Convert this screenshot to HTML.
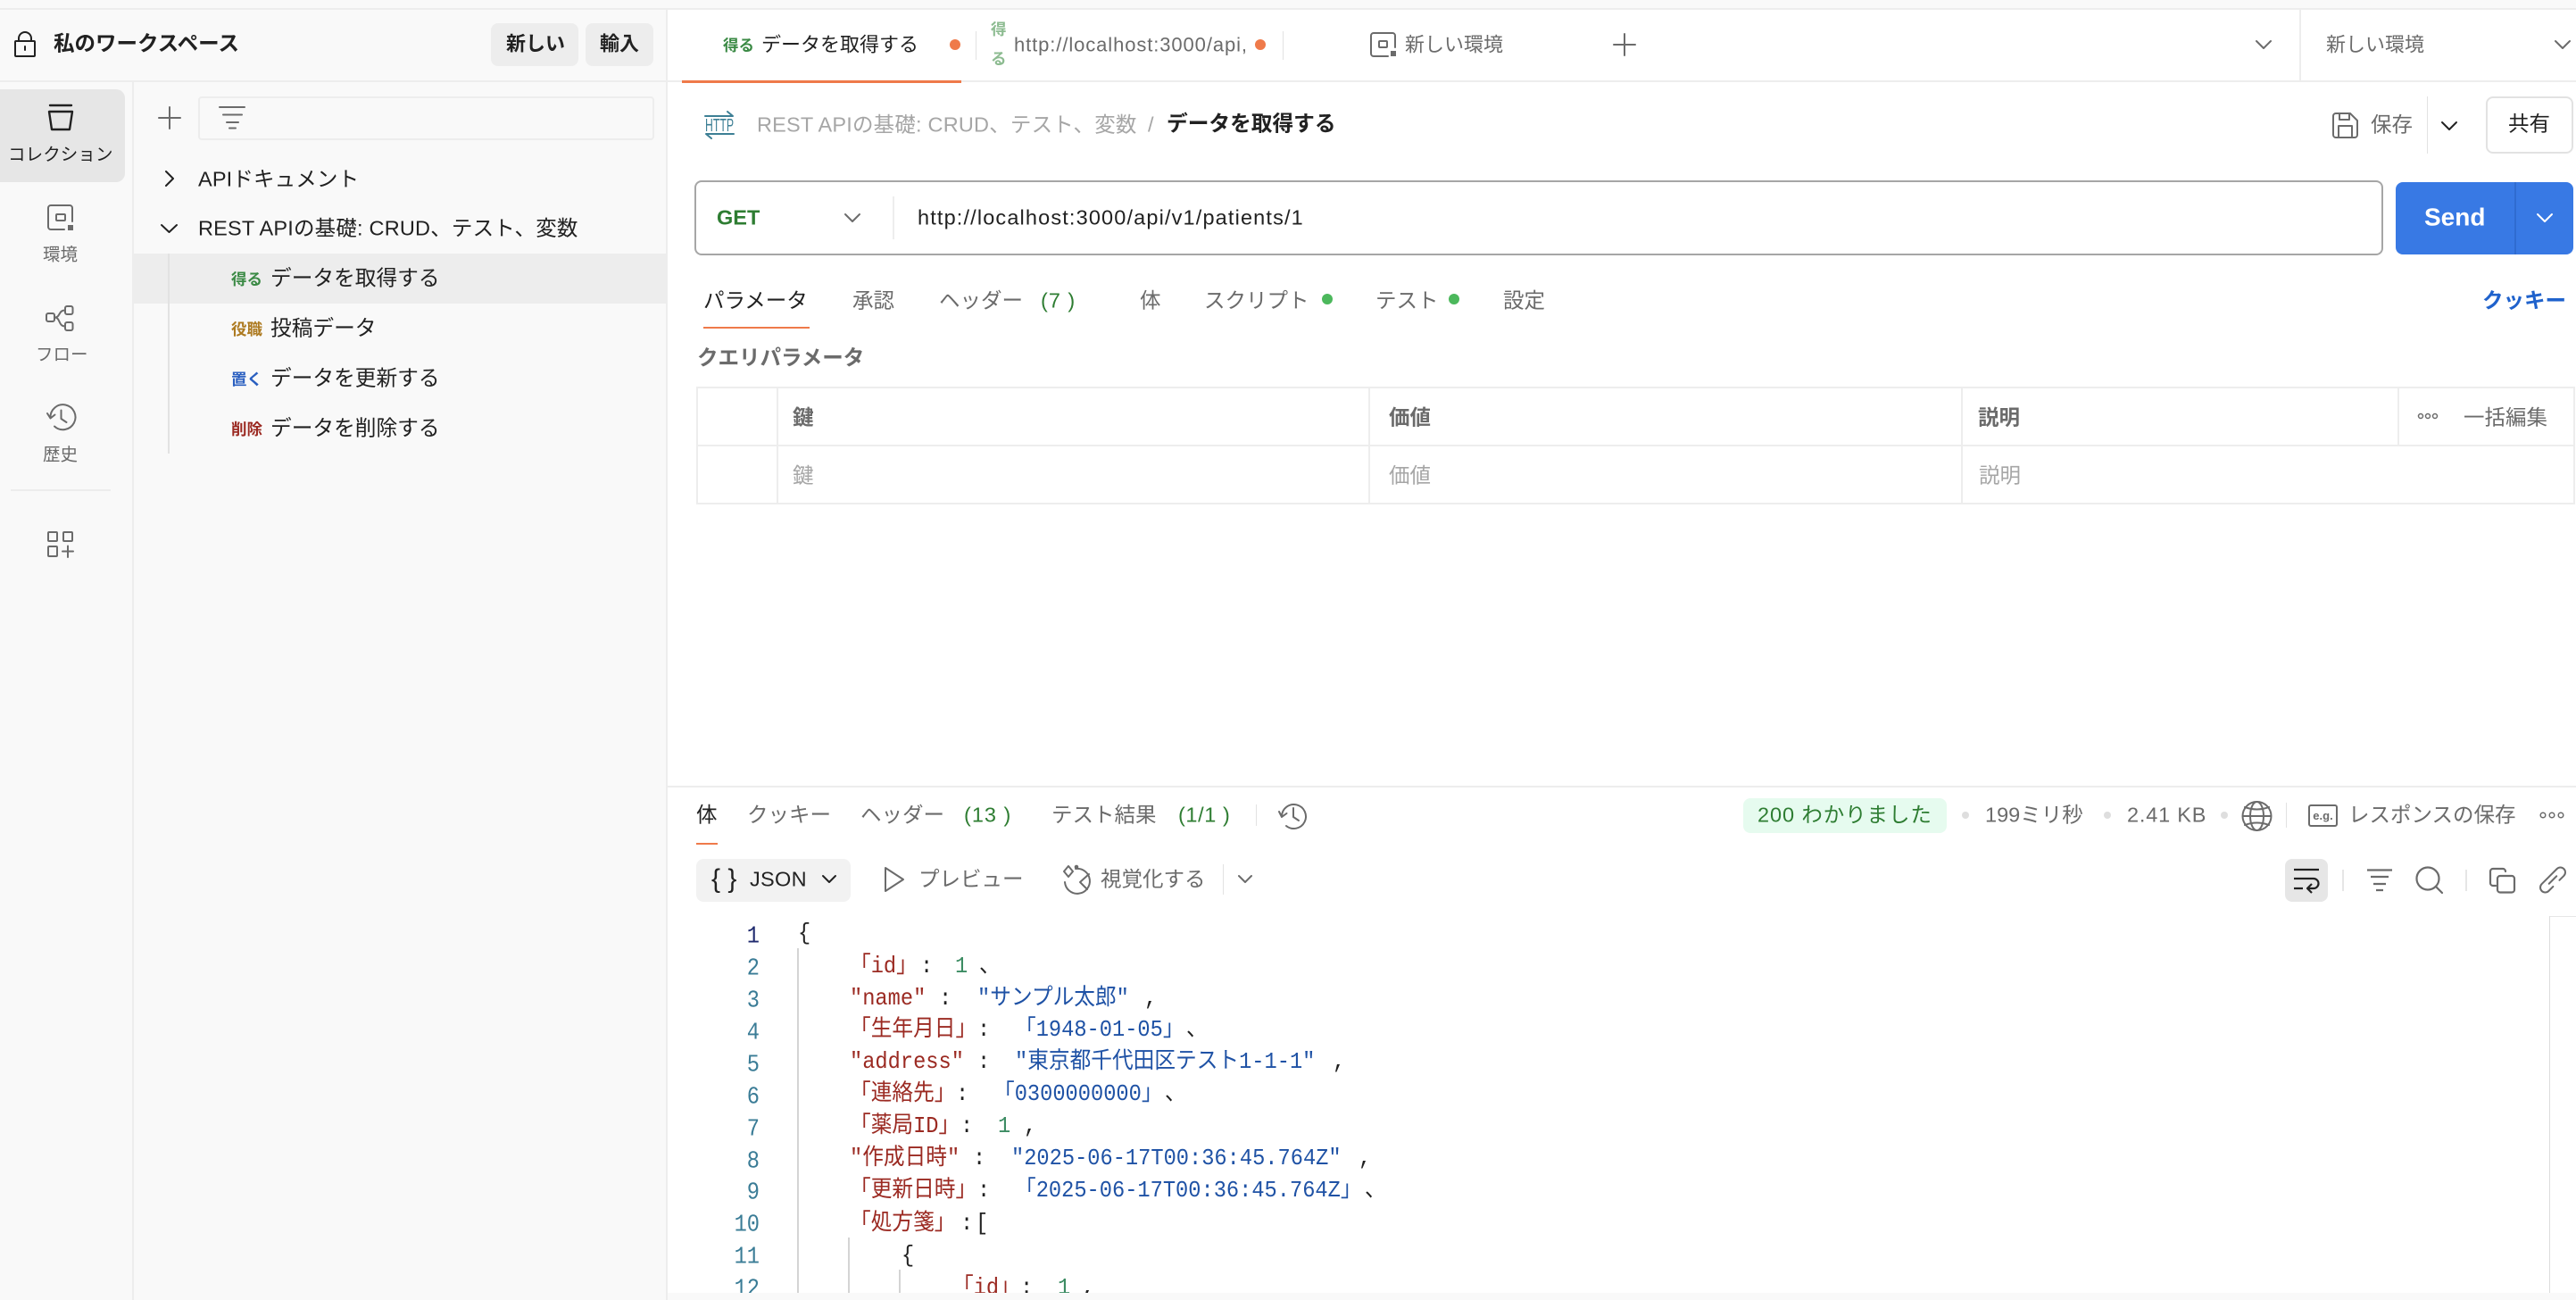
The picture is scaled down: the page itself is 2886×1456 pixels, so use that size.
<!DOCTYPE html>
<html lang="ja"><head><meta charset="utf-8"><title>REST API</title>
<style>
html,body{margin:0;padding:0;background:#fff}
#p{position:relative;width:2886px;height:1456px;overflow:hidden;background:#fff;font-family:"Liberation Sans","Noto Sans CJK JP",sans-serif;color:#212121}
.b{position:absolute}
.t{position:absolute;white-space:nowrap;transform:translateY(-50%);line-height:1.4;font-size:23.5px;color:#212121}
.g{color:#6b6b6b}.l{color:#a6a6a6}.s{font-weight:700}.gr{color:#2e7d32}
.m{position:absolute;white-space:nowrap;transform:translateY(-50%) scaleY(1.08);line-height:1.2;font-family:"Liberation Mono","Noto Sans CJK JP",monospace;font-size:23.7px;color:#212121}
.k{color:#9b2a22}.v{color:#1f52a5}.n{color:#3c8c63}
.ln{position:absolute;white-space:nowrap;transform:translateY(-50%) scaleY(1.12);line-height:1.2;font-family:"Liberation Mono",monospace;font-size:23.7px;color:#3a7c96;right:2035px;text-align:right}
svg{position:absolute;left:0;top:0}
</style></head><body><div id="p">
<!-- backgrounds -->
<div class="b" style="left:0;top:0;width:2886px;height:9px;background:#f9f9f9"></div>
<div class="b" style="left:0;top:9px;width:2886px;height:2px;background:#ededed"></div>
<div class="b" style="left:0;top:11px;width:746px;height:1445px;background:#f9f9f9"></div>
<div class="b" style="left:746px;top:11px;width:2px;height:1445px;background:#ededed"></div>
<div class="b" style="left:0;top:90px;width:2886px;height:2px;background:#ededed"></div>
<div class="b" style="left:148px;top:92px;width:2px;height:1364px;background:#ededed"></div>
<div class="b" style="left:0;top:100px;width:140px;height:104px;background:#e6e6e6;border-radius:0 10px 10px 0"></div>
<div class="b" style="left:150px;top:284px;width:596px;height:56px;background:#ededed"></div>
<div class="b" style="left:188px;top:284px;width:2px;height:224px;background:#e2e2e2"></div>
<div class="b" style="left:12px;top:548px;width:112px;height:2px;background:#ededed"></div>
<div class="b" style="left:550px;top:26px;width:98px;height:48px;background:#ededed;border-radius:8px"></div>
<div class="b" style="left:656px;top:26px;width:76px;height:48px;background:#ededed;border-radius:8px"></div>
<div class="b" style="left:222px;top:108px;width:507px;height:45px;border:2px solid #ededed;border-radius:4px"></div>
<div class="b" style="left:764px;top:90px;width:313px;height:3px;background:#ef7a4a"></div>
<div class="b" style="left:1093px;top:35px;width:1px;height:32px;background:#e2e2e2"></div>
<div class="b" style="left:1437px;top:35px;width:1px;height:32px;background:#e2e2e2"></div>
<div class="b" style="left:2576px;top:11px;width:2px;height:79px;background:#ededed"></div>
<div class="b" style="left:1064px;top:44px;width:12px;height:12px;border-radius:50%;background:#ef7a4a"></div>
<div class="b" style="left:1406px;top:44px;width:12px;height:12px;border-radius:50%;background:#ef7a4a"></div>
<div class="b" style="left:2719px;top:108px;width:1px;height:64px;background:#e2e2e2"></div>
<div class="b" style="left:2785px;top:108px;width:94px;height:60px;border:2px solid #e2e2e2;border-radius:8px"></div>
<div class="b" style="left:778px;top:202px;width:1888px;height:80px;border:2px solid #a6a6a6;border-radius:8px"></div>
<div class="b" style="left:1000px;top:220px;width:2px;height:48px;background:#ededed"></div>
<div class="b" style="left:2684px;top:204px;width:199px;height:81px;background:#3879e4;border-radius:8px"></div>
<div class="b" style="left:2817px;top:204px;width:2px;height:81px;background:#2f6bd0"></div>
<div class="b" style="left:788px;top:366px;width:119px;height:2px;background:#ef7a4a"></div>
<div class="b" style="left:1481px;top:329px;width:12px;height:12px;border-radius:50%;background:#4cb85c"></div>
<div class="b" style="left:1623px;top:329px;width:12px;height:12px;border-radius:50%;background:#4cb85c"></div>
<!-- table -->
<div class="b" style="left:780px;top:433px;width:2101px;height:128px;border:2px solid #ededed"></div>
<div class="b" style="left:780px;top:498px;width:2103px;height:2px;background:#ededed"></div>
<div class="b" style="left:870px;top:433px;width:2px;height:132px;background:#ededed"></div>
<div class="b" style="left:1533px;top:433px;width:2px;height:132px;background:#ededed"></div>
<div class="b" style="left:2197px;top:433px;width:2px;height:132px;background:#ededed"></div>
<div class="b" style="left:2686px;top:433px;width:2px;height:66px;background:#ededed"></div>
<!-- response -->
<div class="b" style="left:748px;top:880px;width:2138px;height:2px;background:#ededed"></div>
<div class="b" style="left:780px;top:944px;width:24px;height:2px;background:#ef7a4a"></div>
<div class="b" style="left:1407px;top:901px;width:1px;height:24px;background:#e2e2e2"></div>
<div class="b" style="left:780px;top:962px;width:173px;height:48px;background:#f2f2f2;border-radius:8px"></div>
<div class="b" style="left:1370px;top:968px;width:1px;height:34px;background:#e2e2e2"></div>
<div class="b" style="left:1953px;top:894px;width:228px;height:39px;background:#e6fbef;border-radius:8px"></div>
<div class="b" style="left:2198px;top:909px;width:8px;height:8px;border-radius:50%;background:#dedede"></div>
<div class="b" style="left:2357px;top:909px;width:8px;height:8px;border-radius:50%;background:#dedede"></div>
<div class="b" style="left:2488px;top:909px;width:8px;height:8px;border-radius:50%;background:#dedede"></div>
<div class="b" style="left:2561px;top:899px;width:1px;height:28px;background:#e2e2e2"></div>
<div class="b" style="left:2560px;top:962px;width:48px;height:48px;background:#e6e6e6;border-radius:8px"></div>
<div class="b" style="left:2624px;top:974px;width:2px;height:24px;background:#e6e6e6"></div>
<div class="b" style="left:2762px;top:974px;width:2px;height:24px;background:#e6e6e6"></div>
<div class="b" style="left:2856px;top:1026px;width:30px;height:1px;background:#e6e6e6"></div>
<div class="b" style="left:2856px;top:1026px;width:1px;height:422px;background:#dcdcdc"></div>
<div class="b" style="left:893px;top:1062px;width:2px;height:386px;background:#d4d4d4"></div>
<div class="b" style="left:950px;top:1386px;width:2px;height:62px;background:#d4d4d4"></div>
<div class="b" style="left:1007px;top:1422px;width:2px;height:26px;background:#d4d4d4"></div>

<!-- icons -->
<svg width="2886" height="1456" viewBox="0 0 2886 1456" fill="none" stroke="#6b6b6b" stroke-width="2" stroke-linecap="round" stroke-linejoin="round">
<g stroke="#212121"><rect x="17" y="46" width="22" height="17" rx="1"/><path d="M21 46v-3a7 7 0 0 1 14 0v3M28 52v4"/>
<path d="M56 118H80M55 125H81L78 145H58Z" stroke-width="2.4"/></g>
<!-- env rail -->
<path d="M81 248V233a3 3 0 0 0-3-3H57a3 3 0 0 0-3 3V254a3 3 0 0 0 3 3H72"/><rect x="63" y="240" width="10" height="7" rx="1"/><rect x="76" y="252" width="6" height="6" fill="#6b6b6b" stroke="none"/>
<!-- flow -->
<rect x="52" y="351" width="9" height="9" rx="2"/><rect x="73" y="343" width="8.500" height="9" rx="2"/><rect x="73" y="361" width="8.500" height="9" rx="2"/>
<path d="M61 355.500C68 355.500 65 347.500 73 347.500M61 355.500C68 355.500 65 365.500 73 365.500"/>
<!-- history rail -->
<path d="M56.500 468A14 14 0 1 1 61 477.500M53 463L56.500 468.500L61.500 464.500M68.500 459.500V469L74.500 473"/>
<!-- apps -->
<rect x="54" y="596" width="10" height="10" rx="1"/><rect x="71" y="596" width="10" height="10" rx="1"/><rect x="54" y="612" width="10" height="11" rx="1"/><path d="M70 617.500H82M76 611.500V624"/>
<!-- sidebar plus + filter -->
<path d="M178 132H202M190 120V144"/>
<path d="M246 120H274M250 128.500H271M254 137H267M257 143.500H264"/>
<path d="M186 192L194 200L186 208M181 252L189.500 260L198 252" stroke="#212121"/>
<!-- tab env + plus + chevrons -->
<path d="M1563 53V40a3 3 0 0 0-3-3H1539a3 3 0 0 0-3 3V60a3 3 0 0 0 3 3H1555"/><rect x="1545" y="46" width="9" height="7" rx="1"/><rect x="1558" y="57" width="6" height="6" fill="#6b6b6b" stroke="none"/>
<path d="M1808 50H1832M1820 38V62"/>
<path d="M2528 46L2536 54L2544 46M2863 46L2871 54L2879 46"/>
<!-- HTTP -->
<g stroke="#3d7f95" stroke-width="2"><path d="M790 130H821L815 125M822 150H791L797 155"/></g>
<text x="790" y="147" font-family="Liberation Sans" font-size="20" fill="#3d7f95" stroke="none" textLength="32" lengthAdjust="spacingAndGlyphs">HTTP</text>
<!-- save -->
<path d="M2617 127H2633L2641 135V151a3 3 0 0 1-3 3H2617a3 3 0 0 1-3-3V130a3 3 0 0 1 3-3ZM2621 127V134H2632V127M2620 154V141H2635V154"/>
<path d="M2736 137L2744 145L2752 137" stroke="#212121"/>
<path d="M947 240L955 248L963 240"/>
<path d="M2843 240L2851 248L2859 240" stroke="#fff"/>
<!-- dots -->
<g stroke-width="1.500"><circle cx="2712" cy="466" r="2.500"/><circle cx="2720" cy="466" r="2.500"/><circle cx="2728" cy="466" r="2.500"/>
<circle cx="2849" cy="913" r="2.800"/><circle cx="2859" cy="913" r="2.800"/><circle cx="2869" cy="913" r="2.800"/></g>
<!-- history resp -->
<path d="M1436 914A13.500 13.500 0 1 1 1441 925M1433 909L1436 915L1441.500 911M1449 905V915L1455 919"/>
<path d="M922 981L929 988L936 981" stroke="#212121"/>
<path d="M992 972L1012 985L992 998Z"/>
<!-- visualize -->
<path d="M1205 973A14 14 0 1 1 1193 988M1197 970L1202 976L1197 982L1192 976Z"/><path d="M1220 979L1210 988L1218 996"/><circle cx="1206" cy="971" r="1.300" fill="#6b6b6b"/>
<path d="M1388 981L1395 988L1402 981"/>
<!-- globe -->
<circle cx="2528.500" cy="914" r="16"/><ellipse cx="2528.500" cy="914" rx="7.500" ry="16"/><path d="M2515 904Q2528.500 909 2542 904M2515 924Q2528.500 919 2542 924M2513 914H2544"/>
<rect x="2587" y="902" width="31" height="23" rx="2"/>
<text x="2602.500" y="918" font-family="Liberation Sans" font-size="13" font-weight="700" fill="#6b6b6b" stroke="none" text-anchor="middle">e.g.</text>
<!-- toolbar -->
<g stroke="#212121" stroke-linecap="butt" stroke-width="2.200"><path d="M2570 974H2598M2570 984H2592a5.500 5.500 0 0 1 0 11H2585M2590 990L2585 995L2590 1000M2570 995H2580"/></g>
<g stroke-linecap="butt" stroke-width="2.200"><path d="M2652 974.500H2680M2656 982H2676M2659 990H2673M2662 997H2670"/></g>
<circle cx="2720" cy="984" r="12.500" stroke-width="2.200"/><path d="M2729 993L2736 1000" stroke-width="2.200"/>
<rect x="2798" y="981" width="19" height="18.500" rx="3" stroke-width="2.200"/><path d="M2796 992H2793a3 3 0 0 1-3-3V976a3 3 0 0 1 3-3H2804a3 3 0 0 1 3 3" stroke-width="2.200" fill="none"/>
<g transform="rotate(-45 2860 985.500)" stroke-width="2"><path d="M2861 980H2848a5.500 5.500 0 0 0 0 11H2855M2865 991H2872a5.500 5.500 0 0 0 0-11H2859M2854 985.500H2866"/></g>
</svg>

<!-- sidebar text -->
<span class="t s" style="left:60px;top:49px;font-size:23.5px">私のワークスペース</span>
<span class="t s" style="left:567px;top:50px;font-size:22px">新しい</span>
<span class="t s" style="left:672px;top:50px;font-size:22px">輸入</span>
<span class="t" style="left:9px;top:174px;font-size:19.5px;letter-spacing:.1px">コレクション</span>
<span class="t g" style="left:48px;top:286px;font-size:19.5px">環境</span>
<span class="t g" style="left:40px;top:398px;font-size:19.5px">フロー</span>
<span class="t g" style="left:48px;top:510px;font-size:19.5px">歴史</span>
<span class="t" style="left:222px;top:201px;font-size:23.500px;letter-spacing:.15px">APIドキュメント</span>
<span class="t" style="left:222px;top:256px;font-size:23.500px;letter-spacing:.2px">REST APIの基礎: CRUD、テスト、変数</span>
<span class="t s" style="left:259px;top:313px;font-size:17.500px;color:#3b8a45">得る</span><span class="t" style="left:303px;top:313px;font-size:23.700px">データを取得する</span>
<span class="t s" style="left:259px;top:369px;font-size:17.500px;color:#ad7a20">役職</span><span class="t" style="left:303px;top:369px;font-size:23.700px">投稿データ</span>
<span class="t s" style="left:259px;top:425px;font-size:17.500px;color:#2a5fc0">置く</span><span class="t" style="left:303px;top:425px;font-size:23.700px">データを更新する</span>
<span class="t s" style="left:259px;top:481px;font-size:17.500px;color:#9b2a22">削除</span><span class="t" style="left:303px;top:481px;font-size:23.700px">データを削除する</span>

<!-- tabs -->
<span class="t s" style="left:810px;top:51px;font-size:17.500px;color:#3b8a45">得る</span>
<span class="t" style="left:853px;top:51px;font-size:22px">データを取得する</span>
<span class="t s" style="left:1110px;top:33px;font-size:17.500px;color:#8cbb90">得</span>
<span class="t s" style="left:1110px;top:66px;font-size:17.500px;color:#8cbb90">る</span>
<span class="t g" style="left:1136px;top:51px;font-size:22px;letter-spacing:.9px">http://localhost:3000/api,</span>
<span class="t g" style="left:1574px;top:51px;font-size:22px">新しい環境</span>
<span class="t g" style="left:2606px;top:51px;font-size:22px">新しい環境</span>

<!-- breadcrumb -->
<span class="t l" style="left:848px;top:140px;letter-spacing:.2px">REST APIの基礎: CRUD、テスト、変数</span>
<span class="t l" style="left:1286px;top:140px">/</span>
<span class="t s" style="left:1307px;top:140px;font-size:23.700px">データを取得する</span>
<span class="t g" style="left:2656px;top:140px">保存</span>
<span class="t" style="left:2810px;top:139px">共有</span>

<!-- url -->
<span class="t s" style="left:803px;top:244px;color:#2e7d32">GET</span>
<span class="t" style="left:1028px;top:244px;letter-spacing:1.15px">http://localhost:3000/api/v1/patients/1</span>
<span class="t s" style="left:2716px;top:243px;font-size:28px;color:#fff">Send</span>

<!-- req tabs -->
<span class="t" style="left:788px;top:337px">パラメータ</span>
<span class="t g" style="left:955px;top:337px">承認</span>
<span class="t g" style="left:1052px;top:337px">ヘッダー</span>
<span class="t gr" style="left:1166px;top:337px;letter-spacing:1px">(7 )</span>
<span class="t g" style="left:1277px;top:337px">体</span>
<span class="t g" style="left:1349px;top:337px">スクリプト</span>
<span class="t g" style="left:1541px;top:337px">テスト</span>
<span class="t g" style="left:1684px;top:337px">設定</span>
<span class="t s" style="left:2781px;top:337px;color:#1f62cc">クッキー</span>
<span class="t s g" style="left:781px;top:401px">クエリパラメータ</span>

<span class="t s g" style="left:888px;top:468px">鍵</span>
<span class="t s g" style="left:1556px;top:468px">価値</span>
<span class="t s g" style="left:2216px;top:468px">説明</span>
<span class="t g" style="left:2760px;top:468px">一括編集</span>
<span class="t l" style="left:888px;top:533px">鍵</span>
<span class="t l" style="left:1556px;top:533px">価値</span>
<span class="t l" style="left:2217px;top:533px">説明</span>

<!-- response tabs -->
<span class="t" style="left:780px;top:913px">体</span>
<span class="t g" style="left:837px;top:913px">クッキー</span>
<span class="t g" style="left:964px;top:913px">ヘッダー</span>
<span class="t gr" style="left:1080px;top:913px;letter-spacing:1px">(13 )</span>
<span class="t g" style="left:1178px;top:913px">テスト結果</span>
<span class="t gr" style="left:1320px;top:913px;letter-spacing:.6px">(1/1 )</span>
<span class="t gr" style="left:1969px;top:913px;letter-spacing:.9px">200 わかりました</span>
<span class="t g" style="left:2224px;top:913px">199ミリ秒</span>
<span class="t g" style="left:2383px;top:913px;letter-spacing:.8px">2.41 KB</span>
<span class="t g" style="left:2631px;top:913px">レスポンスの保存</span>
<span class="t" style="left:797px;top:985px;font-size:30px">{ }</span>
<span class="t" style="left:840px;top:985px;letter-spacing:.3px">JSON</span>
<span class="t g" style="left:1029px;top:985px">プレビュー</span>
<span class="t g" style="left:1233px;top:985px">視覚化する</span>

<!-- line numbers -->
<span class="ln" style="top:1050px;color:#1f2a6e">1</span>
<span class="ln" style="top:1086px">2</span>
<span class="ln" style="top:1122px">3</span>
<span class="ln" style="top:1158px">4</span>
<span class="ln" style="top:1194px">5</span>
<span class="ln" style="top:1230px">6</span>
<span class="ln" style="top:1266px">7</span>
<span class="ln" style="top:1302px">8</span>
<span class="ln" style="top:1337px">9</span>
<span class="ln" style="top:1373px">10</span>
<span class="ln" style="top:1409px">11</span>
<span class="ln" style="top:1445px">12</span>

<!-- code -->
<span class="m" style="left:894px;top:1047px">{</span>
<span class="m k" style="left:952px;top:1084px">「id」</span><span class="m" style="left:1031px;top:1084px">:</span><span class="m n" style="left:1070px;top:1084px">1</span><span class="m" style="left:1097px;top:1084px">、</span>
<span class="m k" style="left:952px;top:1120px">"name"</span><span class="m" style="left:1052px;top:1120px">:</span><span class="m v" style="left:1095px;top:1120px">"サンプル太郎"</span><span class="m" style="left:1282px;top:1120px">,</span>
<span class="m k" style="left:952px;top:1155px">「生年月日」</span><span class="m" style="left:1095px;top:1155px">:</span><span class="m v" style="left:1137px;top:1155px">「1948-01-05」</span><span class="m" style="left:1329px;top:1155px">、</span>
<span class="m k" style="left:952px;top:1191px">"address"</span><span class="m" style="left:1095px;top:1191px">:</span><span class="m v" style="left:1137px;top:1191px">"東京都千代田区テスト1-1-1"</span><span class="m" style="left:1493px;top:1191px">,</span>
<span class="m k" style="left:952px;top:1227px">「連絡先」</span><span class="m" style="left:1071px;top:1227px">:</span><span class="m v" style="left:1113px;top:1227px">「0300000000」</span><span class="m" style="left:1305px;top:1227px">、</span>
<span class="m k" style="left:952px;top:1263px">「薬局ID」</span><span class="m" style="left:1076px;top:1263px">:</span><span class="m n" style="left:1118px;top:1263px">1</span><span class="m" style="left:1147px;top:1263px">,</span>
<span class="m k" style="left:952px;top:1299px">"作成日時"</span><span class="m" style="left:1090px;top:1299px">:</span><span class="m v" style="left:1133px;top:1299px">"2025-06-17T00:36:45.764Z"</span><span class="m" style="left:1522px;top:1299px">,</span>
<span class="m k" style="left:952px;top:1335px">「更新日時」</span><span class="m" style="left:1095px;top:1335px">:</span><span class="m v" style="left:1137px;top:1335px">「2025-06-17T00:36:45.764Z」</span><span class="m" style="left:1529px;top:1335px">、</span>
<span class="m k" style="left:952px;top:1372px">「処方箋」</span><span class="m" style="left:1076px;top:1372px">:</span><span class="m" style="left:1093px;top:1372px">[</span>
<span class="m" style="left:1010px;top:1408px">{</span>
<span class="m k" style="left:1067px;top:1444px">「id」</span><span class="m" style="left:1143px;top:1444px">:</span><span class="m n" style="left:1185px;top:1444px">1</span><span class="m" style="left:1212px;top:1444px">,</span>

<div class="b" style="left:748px;top:1448px;width:2138px;height:8px;background:#f9f9f9"></div>
</div></body></html>
